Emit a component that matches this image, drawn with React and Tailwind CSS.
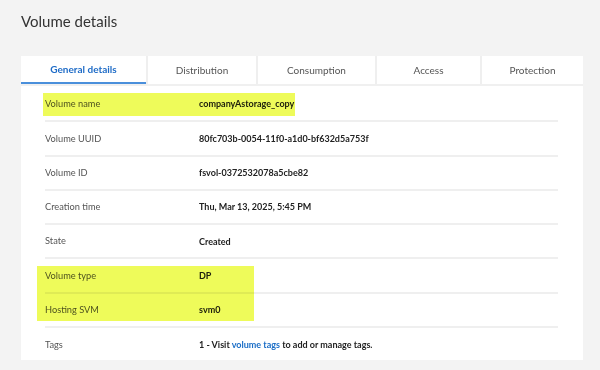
const tabs = [
  { label: "General details", w: "w-[125px]", active: true },
  { label: "Distribution", w: "w-[108px]" },
  { label: "Consumption", w: "w-[117px]" },
  { label: "Access", w: "w-[103px]" },
  { label: "Protection", w: "flex-1" },
];

const rows = [
  ["Volume name", "companyAstorage_copy"],
  ["Volume UUID", "80fc703b-0054-11f0-a1d0-bf632d5a753f"],
  ["Volume ID", "fsvol-0372532078a5cbe82"],
  ["Creation time", "Thu, Mar 13, 2025, 5:45 PM"],
  ["State", "Created"],
  ["Volume type", "DP"],
  ["Hosting SVM", "svm0"],
];

export default function App() {
  return (
    <div
      className="w-[600px] h-[370px] bg-[#f3f3f3] overflow-hidden"
      style={{ fontFamily: 'Lato, "Noto Sans", sans-serif' }}
    >
      <h1 className="pl-[21px] pt-[10px] text-[15px] font-normal text-[#333] leading-[22px]">
        Volume details
      </h1>

      <div className="ml-[21px] mt-[24px] w-[562px] h-[304px] bg-white relative">
        <div className="flex h-[30px] gap-[2px] bg-[#efefef] border-b-2 border-[#f0f0f0]">
          {tabs.map((t) => (
            <div
              key={t.label}
              className={`${t.w} bg-white flex items-center justify-center text-[10px] ${
                t.active
                  ? "text-[#1f6cc7] font-bold border-b-2 border-[#4a8fdb]"
                  : "text-[#555]"
              }`}
            >
              {t.label}
            </div>
          ))}
        </div>

        <div className="pl-[24px] pr-[25px] pt-[2px]">
          {rows.map(([k, v]) => (
            <div
              key={k}
              className="flex items-center h-[34.3px] border-b-2 border-[#efefef]"
            >
              <div className="w-[154px] text-[9.25px] text-[#555]">{k}</div>
              <div className="text-[9px] text-[#222] font-bold">{v}</div>
            </div>
          ))}
          <div className="flex items-center h-[33px]">
            <div className="w-[154px] text-[9.25px] text-[#555]">Tags</div>
            <div className="text-[9px] text-[#222] font-bold">
              1 - Visit <span className="text-[#1a6dc6]">volume tags</span> to add or manage tags.
            </div>
          </div>
        </div>

        <div className="absolute left-[22px] top-[37px] w-[252px] h-[23px] bg-[#eefb5a] mix-blend-multiply" />
        <div className="absolute left-[16px] top-[210px] w-[217px] h-[55px] bg-[#eefb5a] mix-blend-multiply" />
      </div>
    </div>
  );
}
